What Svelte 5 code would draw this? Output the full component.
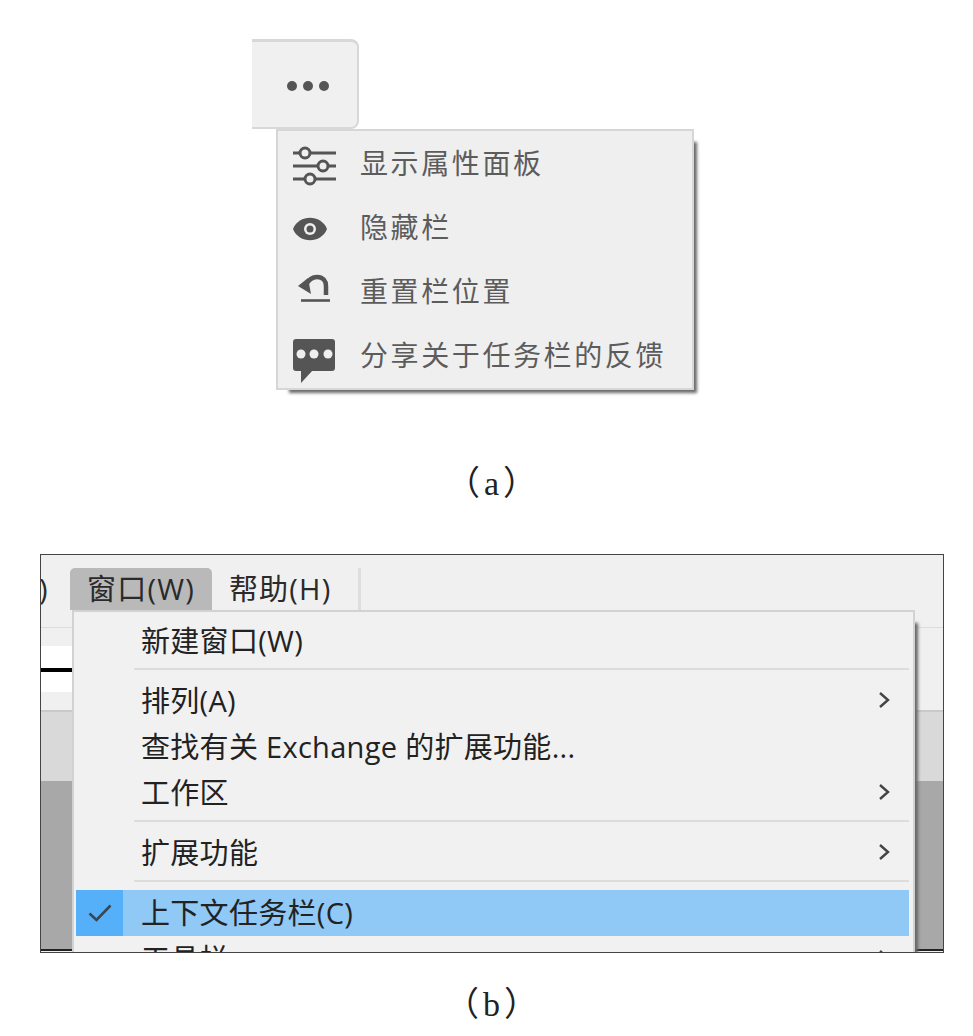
<script>
  const panelRows = [
    { icon: 'sliders', label: '显示属性面板' },
    { icon: 'eye', label: '隐藏栏' },
    { icon: 'undo', label: '重置栏位置' },
    { icon: 'chat', label: '分享关于任务栏的反馈' }
  ];
</script>

{#snippet chevron()}
  <svg class="chev" width="12" height="18" viewBox="0 0 12 18"><path d="M2 2 L10 9 L2 16" fill="none" stroke="#444" stroke-width="2.4"/></svg>
{/snippet}

<div class="page">
  <section class="fig-a">
    <div class="tab"><i></i><i></i><i></i></div>
    <div class="panel">
      {#each panelRows as row}
        <div class="row">
          <svg class="ico" width="44" height="44" viewBox="0 0 44 44">
            {#if row.icon === 'sliders'}
              <g stroke="#555" stroke-width="3" fill="#efefef">
                <path d="M0 12H43M0 25H43M0 38H43"/>
                <circle cx="12" cy="12" r="5"/>
                <circle cx="30" cy="25" r="5"/>
                <circle cx="17" cy="38" r="5"/>
              </g>
            {:else if row.icon === 'eye'}
              <path d="M0 24C6 9 28 9 34 24C28 39 6 39 0 24Z" fill="#555"/>
              <circle cx="17" cy="24" r="6" fill="#efefef"/>
              <circle cx="17" cy="24" r="3.5" fill="#555"/>
            {:else if row.icon === 'undo'}
              <path d="M5 17L15 9L18 25Z" fill="#555"/>
              <path d="M13 16C16 10 20 8 24 8C30 8 33 12 33 17V26" fill="none" stroke="#555" stroke-width="4.5"/>
              <path d="M8 31.5H37" stroke="#555" stroke-width="2.6"/>
            {:else}
              <rect x="0" y="6" width="42" height="32" rx="3" fill="#555"/>
              <path d="M8 37V50L20 37Z" fill="#555"/>
              <circle cx="8" cy="21" r="4.5" fill="#efefef"/>
              <circle cx="21" cy="21" r="4.5" fill="#efefef"/>
              <circle cx="35" cy="21" r="4.5" fill="#efefef"/>
            {/if}
          </svg>
          <span class="row-label">{row.label}</span>
        </div>
      {/each}
    </div>
  </section>

  <div class="cap cap-a">（a）</div>

  <section class="frame">
    <div class="bar">
      <span class="bar-cut">)</span>
      <span class="bar-item on">窗口(W)</span>
      <span class="bar-item">帮助(H)</span>
      <span class="bar-div"></span>
    </div>
    <div class="band-a"></div>
    <div class="band-white"><div class="band-black"></div></div>
    <div class="band-b"></div>
    <div class="band-c"></div>
    <div class="band-d"></div>
    <div class="band-e"></div>

    <div class="menu">
      <div class="mi"><span>新建窗口(W)</span></div>
      <div class="sep"></div>
      <div class="mi"><span>排列(A)</span>{@render chevron()}</div>
      <div class="mi"><span>查找有关 Exchange 的扩展功能...</span></div>
      <div class="mi"><span>工作区</span>{@render chevron()}</div>
      <div class="sep"></div>
      <div class="mi"><span>扩展功能</span>{@render chevron()}</div>
      <div class="sep"></div>
      <div class="mi hl">
        <span class="check">
          <svg width="24" height="18" viewBox="0 0 24 18"><path d="M1.5 9.5L8.5 16L22.5 1.5" fill="none" stroke="#3a4650" stroke-width="2.6"/></svg>
        </span>
        <span>上下文任务栏(C)</span>
      </div>
      <div class="mi"><span>工具栏</span>{@render chevron()}</div>
    </div>
  </section>

  <div class="cap cap-b">（b）</div>
</div>

<style>
  :global(body) { margin: 0; background: #fff; }
  .page { width: 973px; height: 1036px; overflow: hidden; background: #fff; }

  .fig-a { padding: 39px 0 0 252px; }
  .tab {
    box-sizing: border-box;
    width: 107px; height: 90px;
    background: #f0f0f0;
    border: solid #d8d8d8;
    border-width: 3px 2px 2px 0;
    border-radius: 0 8px 8px 0;
    display: flex; align-items: center;
    gap: 6px;
    padding: 3px 0 0 35px;
  }
  .tab i { width: 10px; height: 10px; border-radius: 50%; background: #555; }
  .panel {
    box-sizing: border-box;
    width: 418px; height: 261px;
    margin-left: 24px;
    background: #efefef;
    border: 2px solid #d6d6d6;
    box-shadow: 8px 8px 3px -5px #6a6a6a;
    position: relative;
  }
  .row {
    height: 64px;
    display: flex; align-items: center;
    gap: 23px;
    padding-left: 15px;
    font: 400 28px/1 "Noto Sans CJK SC", sans-serif;
    letter-spacing: 2.6px;
    color: #5c5c5c;
  }
  .row-label { margin-bottom: 3px; }
  .ico { flex: none; overflow: visible; }

  .cap {
    font: 400 34px/1 "Liberation Serif", "Noto Sans CJK SC", serif;
    color: #222;
    text-align: center;
    letter-spacing: 4px;
    padding-left: 14px;
  }
  .cap-a { margin-top: 77px; }
  .cap-b { margin-top: 35px; }

  .frame {
    box-sizing: border-box;
    position: relative;
    width: 904px; height: 399px;
    margin: 53px 0 0 40px;
    border: 1px solid #444;
    overflow: hidden;
    background: #f0f0f0;
  }
  .bar {
    height: 73px;
    box-sizing: border-box;
    border-bottom: 1px solid #dcdcdc;
    display: flex; align-items: flex-start;
    padding-top: 13px;
    font: 400 29px/42px "Open Sans", "Noto Sans CJK SC", sans-serif;
    color: #2a2a2a;
    background: #f0f0f0;
    letter-spacing: 1.2px;
  }
  .bar-cut { width: 31px; margin-left: -2px; }
  .bar-item { padding: 0 17px; border-radius: 5px 5px 0 0; height: 42px; }
  .bar-item.on { background: #b9b9b9; }
  .bar-div { width: 3px; height: 45px; margin-left: 10px; background: #dedede; }
  .band-a { height: 18px; }
  .band-white { width: 100px; height: 46px; background: #fff; display: flex; align-items: center; }
  .band-black { width: 100%; height: 4px; background: #000; margin-top: 1px; }
  .band-b { height: 18px; border-bottom: 2px solid #c9c9c9; }
  .band-c { height: 69px; background: #d9d9d9; }
  .band-d { height: 168px; background: #a8a8a8; }
  .band-e { height: 2px; background: #222; }

  .menu {
    box-sizing: border-box;
    position: absolute;
    left: 31px; top: 55px;
    width: 843px; height: 420px;
    padding: 6px 4px 0 2px;
    background: #f1f1f1;
    border: 2px solid #d2d2d2;
    box-shadow: 8px 8px 3px -5px #666;
    font: 400 29px/46px "Open Sans", "Noto Sans CJK SC", sans-serif;
    letter-spacing: 0.3px;
    color: #222;
  }
  .mi {
    height: 46px;
    display: flex; align-items: center; justify-content: space-between;
    padding: 0 19px 0 65px;
    white-space: nowrap;
  }
  .mi.hl {
    background: #90c8f6;
    padding-left: 0;
    justify-content: flex-start;
  }
  .check {
    width: 47px; height: 46px;
    background: #55aff9;
    margin-right: 18px;
    display: flex; align-items: center; justify-content: center;
  }
  .sep { height: 2px; margin: 4px 0 8px 58px; background: #dcdcdc; }
  .chev { flex: none; margin-bottom: 2px; }
</style>
